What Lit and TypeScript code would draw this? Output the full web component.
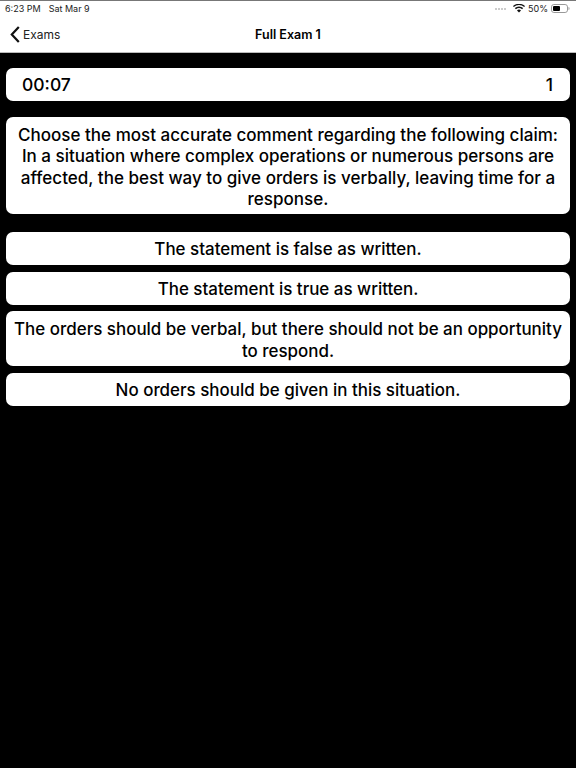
import { LitElement, html, css } from "lit";
import { customElement } from "lit/decorators.js";

@customElement("app-root")
export class AppRoot extends LitElement {
  static styles = css`
    :host { display: block; width: 576px; height: 768px; background: #000; font-family: Inter, "Liberation Sans", sans-serif; color: #000; overflow: hidden; }
    .top { background: #fff; border-top: 1px solid #777; border-bottom: 1px solid #bbb; height: 51px; display: flex; flex-direction: column; }
    .status { height: 15px; display: flex; align-items: center; padding: 0 6px 0 5px; font-size: 9px; color: #222; justify-content: space-between; }
    .status .l { display: flex; gap: 8px; }
    .status .r { display: flex; align-items: center; gap: 3px; }
    .dots { display: flex; gap: 1px; margin-right: 4px; }
    .dots i { width: 2px; height: 2px; border-radius: 50%; background: #bbb; }
    .nav { flex: 1; position: relative; display: flex; align-items: center; justify-content: center; font-size: 12.5px; font-weight: 600; }
    .back { position: absolute; left: 10px; top: 0; bottom: 0; display: flex; align-items: center; gap: 3px; font-weight: 400; font-size: 12px; color: #222; }
    .content { padding: 15px 6px 0; display: flex; flex-direction: column; }
    .card { background: #fff; border-radius: 7px; box-sizing: border-box; text-align: center; font-size: 16.95px; font-weight: 500; line-height: 21.5px; padding: 6.9px 6px 4.6px; }
    .timer { height: 33px; display: flex; justify-content: space-between; align-items: center; padding: 0 17px 0 16px; font-size: 17.5px; }
    .q { margin-top: 16px; height: 97px; padding-top: 6.6px; font-size: 17.05px; }
    .opts { margin-top: 18px; display: flex; flex-direction: column; gap: 7px; }
    .wide { margin-top: -1px; line-height: 22px; }
  `;
  render() {
    return html`
      <div class="top">
        <div class="status">
          <div class="l"><span>6:23 PM</span><span>Sat Mar 9</span></div>
          <div class="r">
            <span class="dots"><i></i><i></i><i></i><i></i></span>
            <svg width="12" height="9" viewBox="0 0 12 9"><path d="M6 8.600 4 6.400a3 3 0 0 1 4 0zM2.900 5.300 1.800 4.100a6.200 6.200 0 0 1 8.400 0L9.100 5.300a4.600 4.600 0 0 0-6.200 0zM.8 3 0 2.100a8.800 8.800 0 0 1 12 0L11.200 3A7.700 7.700 0 0 0 .8 3z" fill="#111"/></svg>
            <span>50%</span>
            <svg width="19" height="9" viewBox="0 0 19 9"><rect x=".5" y=".5" width="16" height="8" rx="2.400" fill="none" stroke="#999"/><rect x="2" y="2" width="7" height="5" rx="1" fill="#000"/><path d="M17.500 3v3c.8-.2 1-.9 1-1.500s-.2-1.300-1-1.500z" fill="#999"/></svg>
          </div>
        </div>
        <div class="nav">
          <div class="back">
            <svg width="10" height="17" viewBox="0 0 10 17"><path d="M8.800 1 1.800 8.500l7 7.500" fill="none" stroke="#111" stroke-width="2.200"/></svg>
            <span>Exams</span>
          </div>
          <span>Full Exam 1</span>
        </div>
      </div>
      <div class="content">
        <div class="card timer"><span>00:07</span><span>1</span></div>
        <div class="card q">Choose the most accurate comment regarding the following claim: In a situation where complex operations or numerous persons are affected, the best way to give orders is verbally, leaving time for a response.</div>
        <div class="opts">
          <div class="card">The statement is false as written.</div>
          <div class="card">The statement is true as written.</div>
          <div class="card wide">The orders should be verbal, but there should not be an opportunity to respond.</div>
          <div class="card">No orders should be given in this situation.</div>
        </div>
      </div>
    `;
  }
}
